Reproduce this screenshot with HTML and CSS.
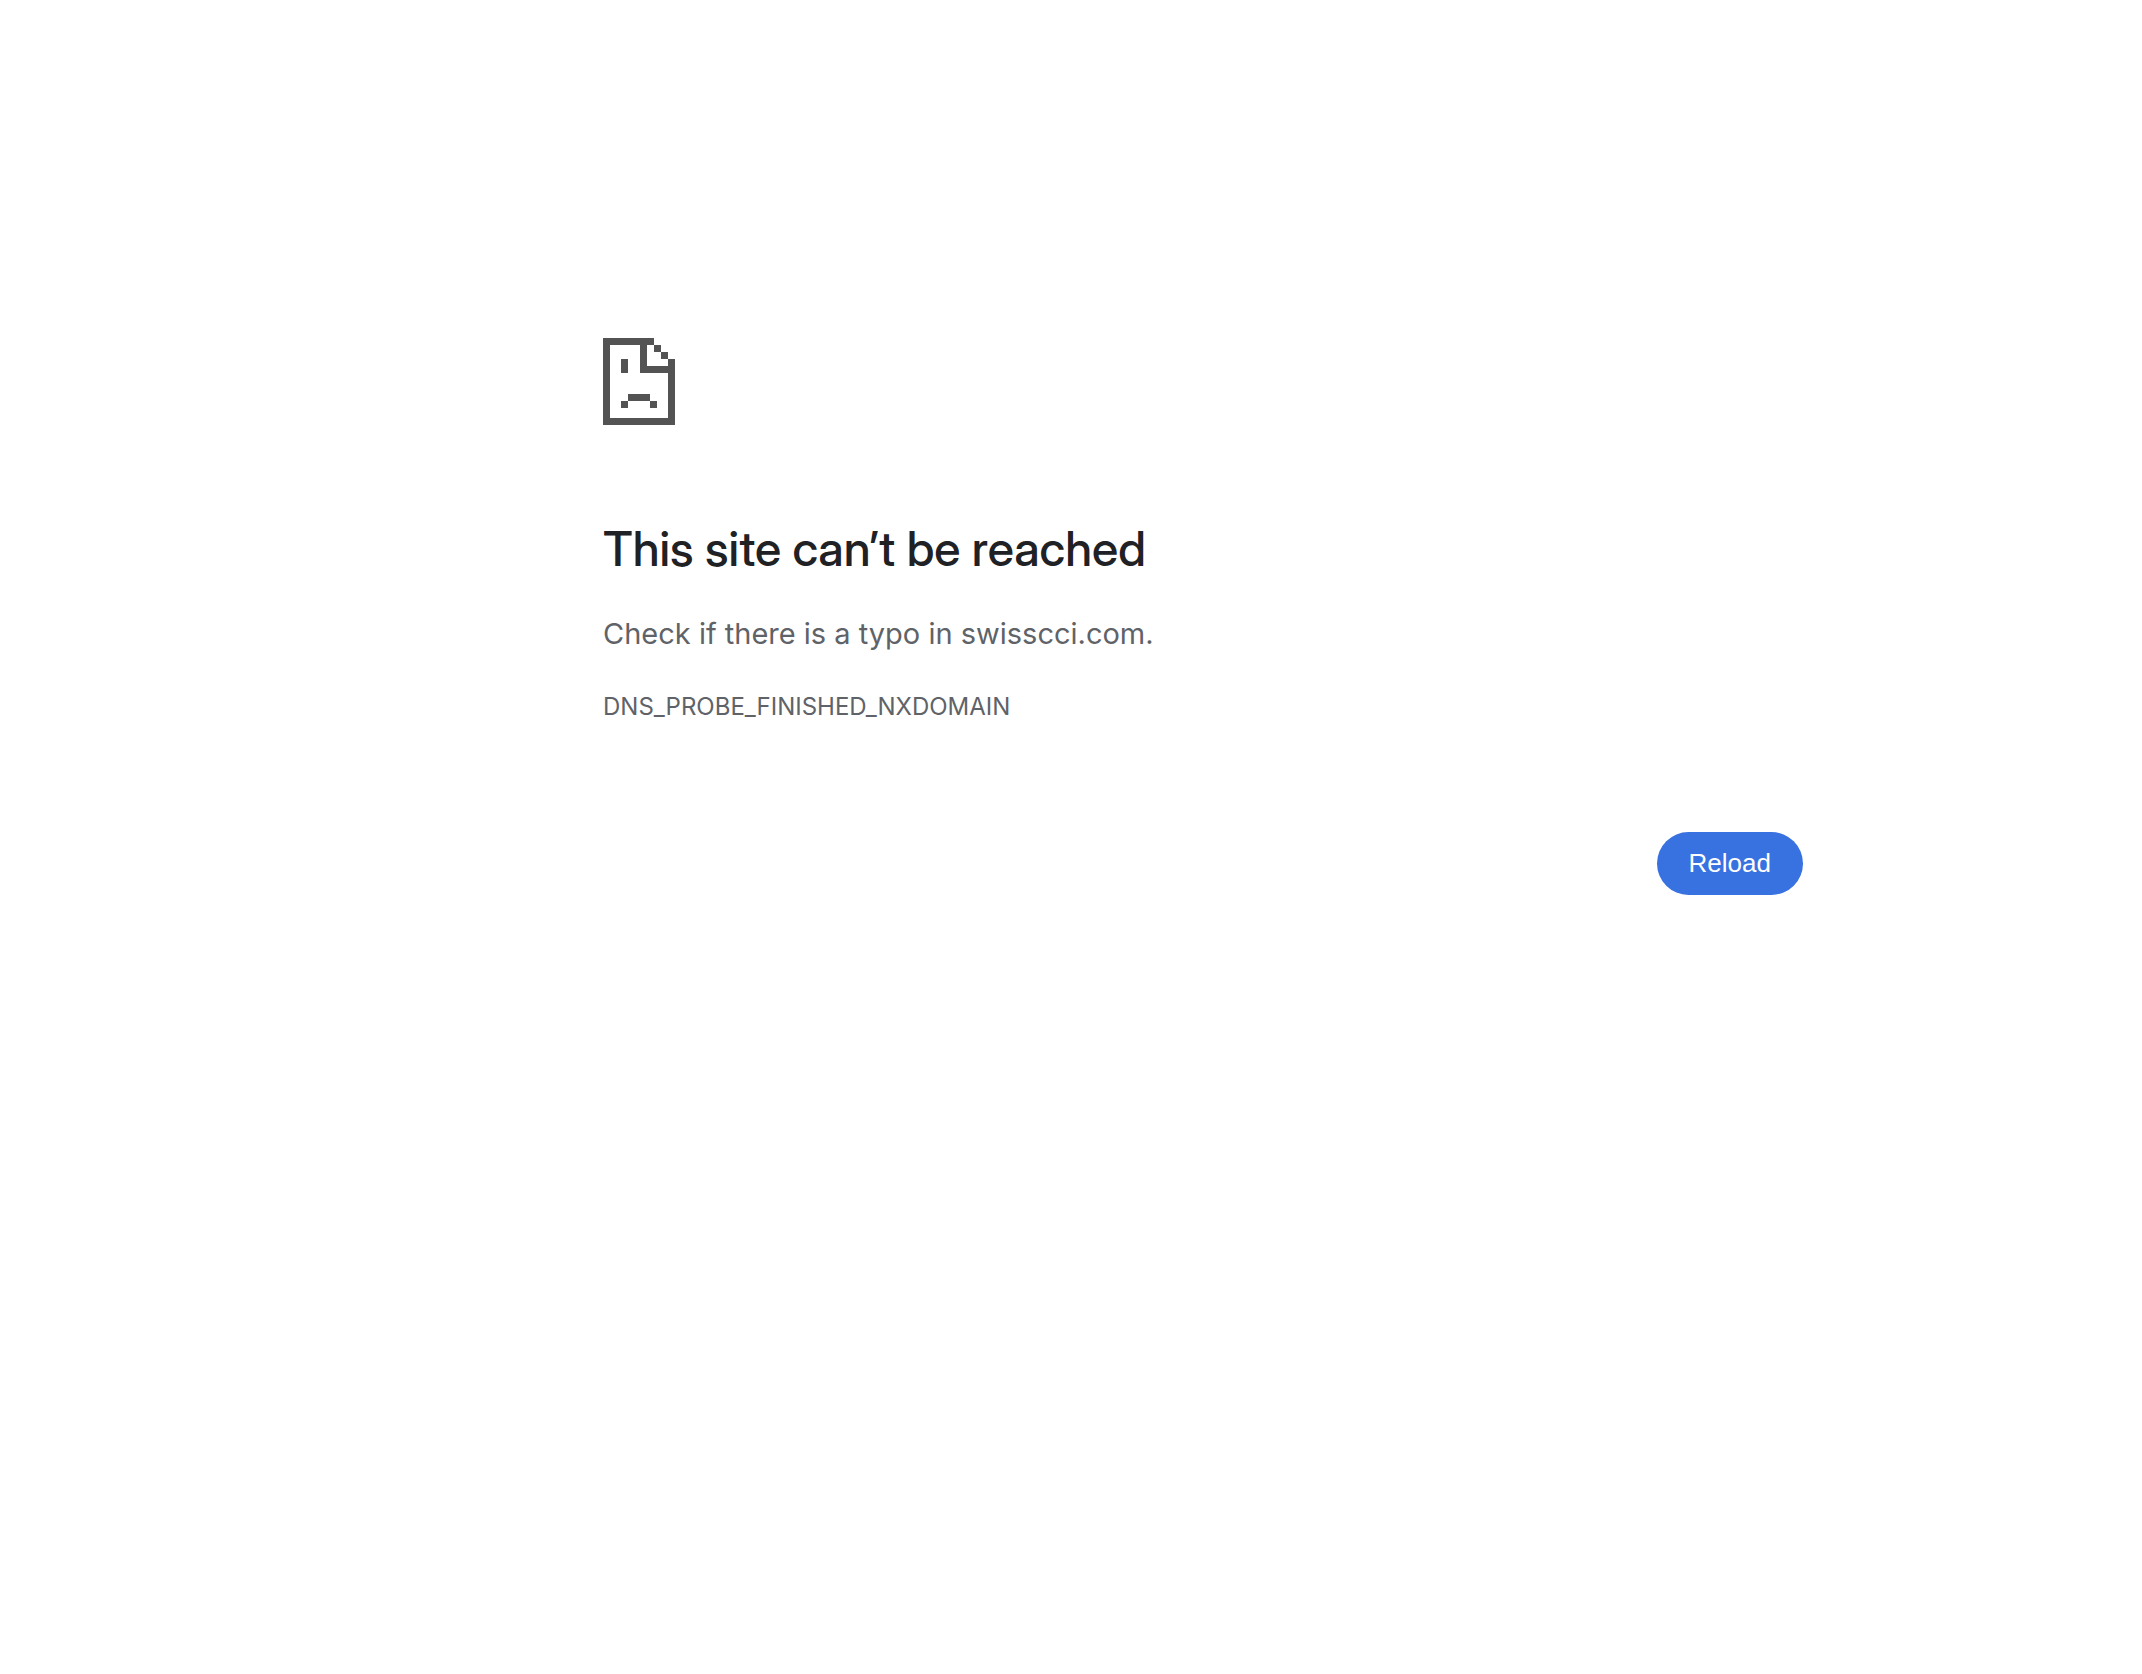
FILE: index.html
```
<!DOCTYPE html>
<html lang="en">
<head>
    <meta charset="UTF-8">
    <meta name="viewport" content="width=device-width, initial-scale=1.0">
    <title>swisscci.com</title>
    <link rel="stylesheet" href="styles.css">
</head>
<body>

    <main class="error-page">
        <!-- Sad page icon -->
        <svg class="icon" width="72" height="87" viewBox="0 0 72 87" fill="currentColor" shape-rendering="crispEdges" aria-hidden="true">
            <path d="M0 0h51v7H0zM0 0h7v87H0zM0 80h72v7H0zM65 21h7v66h-7z"/>
            <path d="M37 0h7v35h-7zM37 28h35v7H37zM51 7h7v7h-7zM58 14h7v7h-7z"/>
            <path d="M18 21h7v14h-7zM25 56h22v7H25zM18 63h7v7h-7zM47 63h7v7h-7z"/>
        </svg>

        <h1>This site can’t be reached</h1>
        <p class="message">Check if there is a typo in swisscci.com.</p>
        <p class="error-code">DNS_PROBE_FINISHED_NXDOMAIN</p>

        <div class="buttons">
            <button class="reload-button" type="button" onclick="location.reload()">Reload</button>
        </div>
    </main>

</body>
</html>
```

FILE: styles.css
```
body {
    font-family: Inter, "Liberation Sans", sans-serif;
    background-color: #fff;
    color: #5f6368;
    margin: 0;
    padding: 338px 48px 48px 312px;
}

.error-page {
    max-width: 1200px;
    margin: 0 auto;
}

.icon {
    display: block;
    color: #535353;
}

h1 {
    color: #202124;
    font-family: "Inter Display", Roboto, sans-serif;
    font-size: 48px;
    font-weight: 500;
    line-height: 60px;
    margin: 94px 0 32px;
}

p {
    margin: 0;
}

.message {
    font-size: 29px;
    line-height: 46px;
}

.error-code {
    font-size: 24px;
    line-height: 36px;
    margin-top: 32px;
}

.buttons {
    display: flex;
    justify-content: flex-end;
    margin-top: 107px;
}

.reload-button {
    font-family: "Liberation Sans", Arial, sans-serif;
    font-size: 26px;
    line-height: 31px;
    padding: 16px 32px;
    border: none;
    border-radius: 32px;
    cursor: pointer;
    background-color: #3871e0;
    color: white;
}
```
